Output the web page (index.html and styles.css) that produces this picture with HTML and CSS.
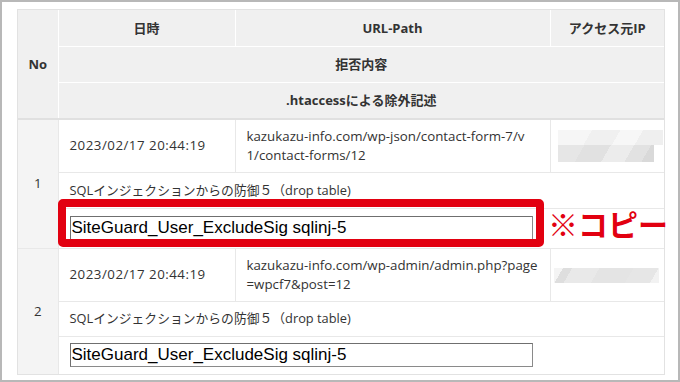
FILE: index.html
```html
<!DOCTYPE html>
<html lang="ja">
<head>
<meta charset="utf-8">
<link rel="stylesheet" href="styles.css">
</head>
<body>
<div class="frame">
  <div class="tbl">
    <table>
      <colgroup>
        <col class="c-no"><col class="c-date"><col class="c-url"><col class="c-ip">
      </colgroup>
      <thead>
        <tr class="h1">
          <th rowspan="3" class="no-head">No</th>
          <th>日時</th>
          <th>URL-Path</th>
          <th>アクセス元IP</th>
        </tr>
        <tr class="h2"><th colspan="3">拒否内容</th></tr>
        <tr class="h3"><th colspan="3">.htaccessによる除外記述</th></tr>
      </thead>
      <tbody>
        <tr class="r1">
          <td rowspan="3" class="no">1</td>
          <td class="date">2023/02/17 20:44:19</td>
          <td class="url">kazukazu-info.com/wp-json/contact-form-7/v<br>1/contact-forms/12</td>
          <td class="ip"><div class="blur blur-a"><span class="band light"></span><span class="band dark"></span></div></td>
        </tr>
        <tr class="r2"><td colspan="3" class="desc">SQLインジェクションからの防御５（drop table)</td></tr>
        <tr class="r3"><td colspan="3"><input class="sig" type="text" value="SiteGuard_User_ExcludeSig sqlinj-5" readonly></td></tr>
        <tr class="r1">
          <td rowspan="3" class="no">2</td>
          <td class="date">2023/02/17 20:44:19</td>
          <td class="url">kazukazu-info.com/wp-admin/admin.php?page<br>=wpcf7&amp;post=12</td>
          <td class="ip"><div class="blur blur-b"><span class="band dark2"></span></div></td>
        </tr>
        <tr class="r2b"><td colspan="3" class="desc">SQLインジェクションからの防御５（drop table)</td></tr>
        <tr class="r3b"><td colspan="3"><input class="sig" type="text" value="SiteGuard_User_ExcludeSig sqlinj-5" readonly></td></tr>
      </tbody>
    </table>
  </div>
  <div class="highlight"></div>
  <div class="note">※コピー</div>
</div>
</body>
</html>
```

FILE: styles.css
```css
html, body {
  margin: 0;
  padding: 0;
  background: #fff;
}

.frame {
  position: relative;
  width: 680px;
  height: 382px;
  box-sizing: border-box;
  border: 2px solid #b8b8b8;
  padding: 7px 0 0 15px;
  background: #fff;
  font-family: "Open Sans", "Noto Sans CJK JP", sans-serif;
  color: #333;
}

.tbl {
  width: 648px;
  box-sizing: border-box;
  border: 1px solid #e2e2e2;
}

table {
  width: 646px;
  border-collapse: collapse;
  border-style: hidden;
  table-layout: fixed;
  font-size: 13.3px;
}

.c-no { width: 40px; }
.c-date { width: 177px; }
.c-url { width: 315px; }
.c-ip { width: 114px; }

th {
  background: #f0f0f0;
  border: 1px solid #fff;
  font-weight: 700;
  font-size: 13px;
  text-align: center;
  padding: 0 4px;
  line-height: 18px;
}

.no-head,
.h3 th {
  border-bottom: 2px solid #e0e0e0;
}

.h1 { height: 36px; }
.h2 { height: 36px; }
.h3 { height: 37px; }

td {
  border: 1px solid #e8e8e8;
  padding: 0 11px;
  line-height: 19px;
  vertical-align: middle;
  white-space: nowrap;
}

td.date {
  letter-spacing: 0.5px;
}

td.desc {
  font-size: 12.8px;
}

.r1 { height: 53px; }
.r2 { height: 36px; }
.r3 { height: 40px; }
.r2b { height: 35px; }
.r3b { height: 38px; }

td.no {
  background: #f4f4f4;
  text-align: center;
  padding: 0;
}

td.ip {
  padding: 0 0 0 7px;
}

.blur {
  display: flex;
  flex-direction: column;
}

.band {
  display: block;
}

.blur-a .light {
  width: 105px;
  height: 15px;
  background: linear-gradient(120deg, #f6f6f6 0 30%, #f0f0f0 30% 55%, #f7f7f7 55% 75%, #efefef 75%);
}

.blur-a .dark {
  width: 96px;
  height: 17px;
  background: linear-gradient(120deg, #e6e6e6 0 25%, #e1e1e1 25% 50%, #ececec 50% 72%, #e2e2e2 72% 88%, #d9d9d9 88%);
}

.blur-b .dark2 {
  width: 105px;
  height: 15px;
  margin-left: -4px;
  margin-top: 2px;
  background: linear-gradient(120deg, #f4f4f4 0 8%, #dedede 8% 16%, #e9e9e9 16% 40%, #e4e4e4 40% 70%, #e6e6e6 70% 92%, #f2f2f2 92%);
}

.sig {
  display: block;
  width: 463px;
  height: 24px;
  box-sizing: border-box;
  margin: 0;
  padding: 0 1px;
  border: 1px solid #8a8a8a;
  border-top-color: #6f6f6f;
  border-left-color: #6f6f6f;
  font-family: "Liberation Sans", Arial, sans-serif;
  font-size: 17px;
  color: #000;
  background: #fff;
  outline: none;
}

.highlight {
  position: absolute;
  left: 56px;
  top: 197px;
  width: 486px;
  height: 48px;
  box-sizing: border-box;
  border: 8px solid #e20010;
  border-radius: 5px;
}

.note {
  position: absolute;
  left: 546px;
  top: 205px;
  font-family: "Noto Sans CJK JP", sans-serif;
  font-weight: 700;
  font-size: 30px;
  line-height: 32px;
  color: #e20010;
  white-space: nowrap;
}
```
